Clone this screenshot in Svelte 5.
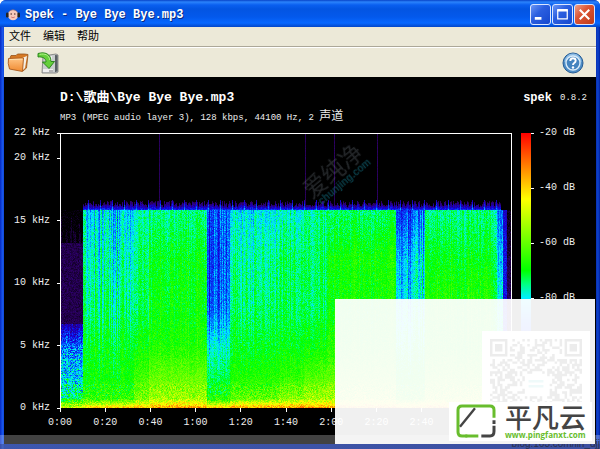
<script>
    import { onMount } from "svelte";

    const menus = ["文件", "编辑", "帮助"];
    const freqs = ["22 kHz", "20 kHz", "15 kHz", "10 kHz", "5 kHz", "0 kHz"];
    const times = ["0:00", "0:20", "0:40", "1:00", "1:20", "1:40", "2:00", "2:20", "2:40", "3:00"];
    const levels = ["-20 dB", "-40 dB", "-60 dB", "-80 dB", "-100 dB"];

    const W = 450;
    const H = 274;
    let canvas;

    // dB -> colour
    const palette = [
        [-120, 0, 0, 0],
        [-108, 45, 0, 100],
        [-96, 20, 0, 220],
        [-88, 0, 90, 255],
        [-80, 0, 235, 255],
        [-75, 0, 255, 130],
        [-70, 0, 255, 0],
        [-58, 120, 255, 0],
        [-44, 255, 255, 0],
        [-20, 255, 0, 0],
    ];

    // levels at these frequencies (kHz) for each part of the song
    const knots = [16, 12, 8, 5, 2.5, 0.8, 0.3, 0];
    const parts = [
        { end: 22, spread: 5, db: [-119, -109, -108, -88, -81, -75, -56, -48] },
        { end: 25, spread: 2, db: [-76, -74, -72, -70, -69, -66, -50, -40] },
        { end: 73, spread: 8, db: [-82, -78, -75, -71, -69, -66, -50, -36] },
        { end: 88, spread: 4, db: [-77, -74, -73, -69, -64, -58, -46, -34] },
        { end: 146, spread: 4, db: [-75, -70, -69, -67, -60, -54, -42, -32] },
        { end: 169, spread: 8, db: [-89, -90, -88, -79, -73, -67, -50, -38] },
        { end: 218, spread: 5, db: [-80, -76, -74, -71, -67, -61, -44, -33] },
        { end: 243, spread: 5, db: [-78, -73, -73, -70, -65, -57, -42, -32] },
        { end: 267, spread: 4, db: [-75, -73, -73, -69, -62, -54, -42, -32] },
        { end: 335, spread: 4, db: [-74, -68, -68, -66, -60, -54, -42, -32] },
        { end: 364, spread: 8, db: [-90, -82, -79, -74, -69, -63, -46, -36] },
        { end: 432, spread: 4, db: [-75, -70, -66, -66, -60, -54, -42, -32] },
        { end: 436, spread: 4, db: [-79, -75, -73, -71, -68, -62, -50, -40] },
        { end: 442, spread: 5, db: [-87, -82, -78, -76, -72, -66, -56, -48] },
        { end: 446, spread: 2, db: [-98, -94, -95, -94, -90, -86, -80, -80] },
        { end: 450, spread: 3, db: [-118, -113, -108, -116, -112, -112, -110, -110] },
    ];
    const clicks = [98, 244, 273, 316];

    function random(seed) {
        let s = seed;
        return () => {
            s = (s * 1664525 + 1013904223) >>> 0;
            return s / 4294967296;
        };
    }

    function colour(db) {
        const v = Math.max(-120, Math.min(-20, db));
        let i = 1;
        while (i < palette.length - 1 && palette[i][0] < v) i++;
        const a = palette[i - 1];
        const b = palette[i];
        const t = (v - a[0]) / (b[0] - a[0]);
        return [1, 2, 3].map((n) => a[n] + (b[n] - a[n]) * t);
    }

    function level(part, khz) {
        let i = 1;
        while (i < knots.length - 1 && knots[i] > khz) i++;
        const t = (knots[i - 1] - khz) / (knots[i - 1] - knots[i]);
        return part.db[i - 1] + (part.db[i] - part.db[i - 1]) * t;
    }

    onMount(() => {
        const ctx = canvas.getContext("2d");
        const image = ctx.createImageData(W, H);
        const rnd = random(77);
        for (let x = 0; x < W; x++) {
            const part = parts.find((p) => x < p.end);
            const intro = x < 22;
            const shade = (rnd() + rnd() - 1) * part.spread;
            const spike = x % 12 === 3;
            const fringe = spike ? 10 : 3 + rnd() * 6;
            const reach = intro ? 13.3 + (rnd() > 0.5 ? rnd() * 3 : 0) : 16;
            for (let y = 0; y < H; y++) {
                const khz = ((H - y) / H) * 22.05;
                const noise = (rnd() + rnd() - 1) * 5;
                let db = -120;
                if (khz > 16) {
                    const up = ((khz - 16) / 22.05) * H;
                    if (!intro && x < 440 && up < fringe) {
                        db = (spike ? -84 : -92) - (up / fringe) * 18 + noise;
                    } else if (clicks.includes(x)) {
                        db = -109 + noise * 0.4;
                    }
                } else if (intro && khz > 6.8) {
                    db = (khz > 13.3 ? (khz < reach ? -115 : -120) : -111) + noise;
                } else if (intro && khz > 5) {
                    db = -88 - (khz - 5) * 7 + shade + noise * 1.8;
                } else {
                    db = level(part, khz) + shade * Math.min(1, khz / 8) + noise * 1.1;
                    if (khz < 2) db += (rnd() - 0.5) * 12;
                    // horizontal harmonics in the quiet opening
                    if (intro) db += noise * 1.2 + (y % 5 === 0 ? 4 : 0);
                }
                const [r, g, b] = colour(db);
                const p = (y * W + x) * 4;
                image.data[p] = r;
                image.data[p + 1] = g;
                image.data[p + 2] = b;
                image.data[p + 3] = 255;
            }
        }
        ctx.putImageData(image, 0, 0);
    });

    function qrCells() {
        const rnd = random(5);
        const cells = [];
        for (let y = 0; y < 37; y++) {
            for (let x = 0; x < 37; x++) {
                const corner = (x < 8 || x > 28) && y < 8;
                const centre = x > 13 && x < 23 && y > 13 && y < 23;
                if (rnd() > 0.5 && !corner && !centre) cells.push(`M${x} ${y}h1v1h-1z`);
            }
        }
        return cells.join("");
    }
    const qr = qrCells();
</script>

<div class="window">
    <header class="titlebar">
        <svg class="face" viewBox="0 0 14 12" aria-hidden="true">
            <circle cx="7" cy="6" r="5.2" fill="#f6c9bb" />
            <path d="M2.5 3Q7-1.500 11.500 3" fill="none" stroke="#8a6a72" stroke-width=".7" />
            <rect x="0" y="3.500" width="2.600" height="5" rx="1.200" fill="#222" />
            <rect x="11.400" y="3.500" width="2.600" height="5" rx="1.200" fill="#222" />
            <circle cx="5.200" cy="5" r=".8" fill="#533" />
            <circle cx="8.800" cy="5" r=".8" fill="#533" />
            <path d="M5.200 8Q7 9.500 8.800 8" fill="none" stroke="#c66" stroke-width=".8" />
        </svg>
        <span class="caption">Spek - Bye Bye Bye.mp3</span>
        <button class="control" aria-label="最小化">
            <svg viewBox="0 0 20 20"><path d="M4 14h7" stroke="#fff" stroke-width="3" /></svg>
        </button>
        <button class="control" aria-label="最大化">
            <svg viewBox="0 0 20 20">
                <path d="M5 5.500h10v9H5z" fill="none" stroke="#fff" stroke-width="1.300" />
                <path d="M4.500 5.500h11" stroke="#fff" stroke-width="2.500" />
            </svg>
        </button>
        <button class="control close" aria-label="关闭">
            <svg viewBox="0 0 20 20">
                <path d="M5 5l10 10M15 5L5 15" stroke="#fff" stroke-width="2.200" />
            </svg>
        </button>
    </header>

    <nav class="menubar">
        {#each menus as menu}
            <button>{menu}</button>
        {/each}
    </nav>

    <div class="toolbar">
        <button aria-label="打开">
            <svg viewBox="0 0 22 22">
                <defs>
                    <linearGradient id="folder" x1="0" y1="0" x2="0" y2="1">
                        <stop offset="0" stop-color="#ffc585" />
                        <stop offset="1" stop-color="#f08a30" />
                    </linearGradient>
                </defs>
                <path d="M3 6l1-2.500h5l1.500-1.500h7L21 2.500 19.500 16 16 19z" fill="#d67a25" stroke="#95531c" stroke-width=".8" />
                <path d="M15 6l5-2-2 12-3 3z" fill="#f5f0e6" />
                <path d="M1.500 6.500L16.500 6l-1 13.500L2.500 17Q.5 11 1.500 6.500z" fill="url(#folder)" stroke="#a8571a" stroke-width=".9" />
                <path d="M2.500 7.500l13-.4" stroke="#ffe0ac" />
            </svg>
        </button>
        <button aria-label="保存">
            <svg viewBox="0 0 22 22">
                <path d="M6 4l13-2 2 1v17l-2 1H5z" fill="#c9cdcd" stroke="#777" stroke-width=".8" />
                <path d="M18 3l2.600.3v16l-2.600 1z" fill="#596064" />
                <path d="M8 5l7-1v7l-7 1zM6 17h10v3H6z" fill="#eee" />
                <path d="M12 19h4" stroke="#777" />
                <path d="M1 1.500C8-.500 14 2 14 9.500h3.500L12 16.500 5.500 10H9C9 6 5 4.500 1 5z" fill="#65cf3b" stroke="#237e17" stroke-width=".9" />
                <path d="M2.500 2.400C8 1.200 12 3 12.800 8" fill="none" stroke="#b4f28e" />
            </svg>
        </button>
        <button class="help" aria-label="帮助">
            <svg viewBox="0 0 22 22">
                <circle cx="11" cy="11" r="10" fill="#4d8cc5" stroke="#265c94" />
                <path d="M2.500 10A8.500 8.500 0 0 1 19.500 10Q11 13 2.500 10" fill="#8fbde5" />
                <circle cx="11" cy="11" r="7" fill="#4584bf" stroke="#d9ebf8" stroke-width="1.400" />
                <path d="M8.300 9Q8.300 6.300 11 6.300T13.700 8.800Q13.700 10.300 12 11.200 11 11.800 11 13" fill="none" stroke="#fff" stroke-width="1.900" />
                <circle cx="11" cy="15.500" r="1.200" fill="#fff" />
            </svg>
        </button>
    </div>

    <main class="view">
        <div class="heading">
            <h1>D:\歌曲\Bye Bye Bye.mp3</h1>
            <p class="brand"><b>spek</b> <span>0.8.2</span></p>
        </div>
        <p class="meta">MP3 (MPEG audio layer 3), 128 kbps, 44100 Hz, 2 <span>声道</span></p>

        <div class="chart">
            <div class="freqs">
                {#each freqs as freq}
                    <span>{freq}</span>
                {/each}
            </div>
            <div class="plot">
                <canvas bind:this={canvas} width={W} height={H}></canvas>
                <div class="mark">爱纯净<small>chunjing.com</small></div>
            </div>
            <div class="legend"></div>
            <div class="levels">
                {#each levels as label}
                    <span>{label}</span>
                {/each}
            </div>
            <div class="times">
                {#each times as time}
                    <span>{time}</span>
                {/each}
            </div>
        </div>
    </main>

    <div class="strip"><span>blog.163.com/lin_djj</span></div>

    <aside class="promo">
        <div class="code">
            <svg viewBox="0 0 37 37" aria-hidden="true">
                <path d={qr} fill="#ededed" />
                <path d="M.5.5h6v6h-6zM30.500.5h6v6h-6z" fill="none" stroke="#ececec" />
                <path d="M2 2h3v3H2zM32 2h3v3h-3z" fill="#ececec" />
                <path d="M15.500 17h6M15.500 19h6" stroke="#effafa" />
            </svg>
        </div>
        <div class="brandbox">
            <svg viewBox="0 0 120 102" aria-hidden="true">
                <path d="M34 96H18Q6 96 6 84V18Q6 6 18 6H102Q114 6 114 18V41" fill="none" stroke="#68bd2d" stroke-width="9" />
                <path d="M28 96H67" stroke="#68bd2d" stroke-width="9" />
                <path d="M12 68L57 13" stroke="#444" stroke-width="7" />
                <path d="M114 49V60M114 65V82Q114 96 102 96H76" fill="none" stroke="#444" stroke-width="9" />
            </svg>
            <div>
                <strong>平凡云</strong>
                <a href="http://www.pingfanxt.com">www.pingfanxt.com</a>
            </div>
        </div>
    </aside>
</div>

<style>
    :global(body) {
        margin: 0;
        background: #fff;
    }

    .window {
        position: relative;
        display: flex;
        flex-direction: column;
        box-sizing: border-box;
        min-height: 100vh;
        padding: 0 4px 5px;
        overflow: hidden;
        border-radius: 6px 6px 0 0;
        background: linear-gradient(90deg, #0629c4, #1c5df0 3px, #0b3dcf 4px, #0b30b4 calc(100% - 4px), #0d43cb calc(100% - 2px), #001ea0);
        font-family: "Liberation Mono", "Noto Sans CJK SC", monospace;
        font-size: 10px;
    }

    button {
        padding: 0;
        border: 0;
        background: none;
    }

    svg {
        display: block;
        width: 100%;
        height: 100%;
    }

    h1,
    p {
        margin: 0;
    }

    .titlebar {
        display: flex;
        align-items: center;
        gap: 1px;
        height: 27px;
        margin: 0 -4px;
        padding: 0 5px 0 6px;
        background: linear-gradient(#0843c8, #2b83fb 2px, #0a5ff0 5px, #0355e2 9px, #0359ec 17px, #0768ff 23px, #0346c8);
    }

    .titlebar .face {
        width: 14px;
        height: 12px;
        margin-top: 2px;
    }

    .caption {
        flex: 1;
        margin: 2px 0 0 4px;
        color: #fff;
        font-size: 12px;
        font-weight: bold;
        text-shadow: 1px 1px #0a2a80;
    }

    .control {
        box-sizing: border-box;
        width: 21px;
        height: 21px;
        margin-top: 2px;
        border: 1px solid #dbe6ff;
        border-radius: 3px;
        background: linear-gradient(135deg, #6b96f5, #2b5fe0 40%, #1547ce);
    }

    .close {
        background: linear-gradient(135deg, #f0a088, #dc5535 40%, #bd3a18);
    }

    .menubar {
        display: flex;
        gap: 12px;
        height: 19px;
        padding-left: 5px;
        border-bottom: 1px solid #aca899;
        background: #ece9d8;
    }

    .menubar button {
        height: 17px;
        color: #000;
        font: 11px/17px "Noto Sans CJK SC", sans-serif;
    }

    .toolbar {
        display: flex;
        align-items: center;
        gap: 8px;
        height: 29px;
        padding: 0 12px 0 3px;
        border-top: 1px solid #fff;
        background: #ece9d8;
    }

    .toolbar button {
        width: 22px;
        height: 22px;
    }

    .toolbar .help {
        margin-left: auto;
    }

    .view {
        display: flex;
        flex: 1;
        flex-direction: column;
        padding-top: 12px;
        background: #000;
        color: #eee;
    }

    .heading {
        display: flex;
        justify-content: space-between;
        padding: 0 9px 0 56px;
        line-height: 18px;
    }

    h1 {
        color: #fff;
        font-size: 13px;
        line-height: 18px;
    }

    .brand {
        display: flex;
        gap: 8px;
    }

    .brand b {
        color: #fff;
        font-size: 12px;
    }

    .brand span {
        font-size: 9px;
    }

    .meta {
        margin: 3px 0 7px;
        padding-left: 56px;
        font-size: 9px;
        line-height: 16px;
    }

    .meta span {
        font-size: 12px;
        line-height: 12px;
    }

    .chart {
        display: grid;
        flex: 1;
        grid-template-columns: 56px 1fr 10px 65px;
        grid-template-rows: 1fr 36px;
    }

    .freqs {
        display: grid;
        grid-template-rows: 2fr repeat(4, 5fr) 0;
        text-align: right;
    }

    .freqs span,
    .levels span {
        display: flex;
        align-items: center;
        height: 14px;
        margin-top: -7px;
        line-height: 14px;
        white-space: pre;
    }

    .freqs span {
        justify-content: flex-end;
        gap: 7px;
    }

    .freqs span::after,
    .levels span::before {
        content: "";
        width: 3px;
        height: 1px;
        background: #fff;
    }

    .plot {
        position: relative;
        display: grid;
        margin-right: 9px;
        border: 1px solid #fff;
        border-bottom: 0;
    }

    canvas {
        width: 100%;
        height: 100%;
        min-height: 0;
    }

    .mark {
        position: absolute;
        top: 22px;
        left: 240px;
        color: rgba(120, 130, 140, 0.3);
        font: 23px/24px "Noto Sans CJK SC", sans-serif;
        transform: rotate(-40deg);
    }

    .mark small {
        display: block;
        color: rgba(20, 120, 140, 0.5);
        font: bold 10px/12px "Liberation Sans", sans-serif;
        text-align: right;
    }

    .legend {
        background: linear-gradient(#f00, #ff0 24%, #78ff00 38%, #0f0 50%, #00ff82 55%, #0ef 60%, #005aff 68%, #1400dc 76%, #2d0064 88%, #000);
    }

    .levels {
        display: grid;
        grid-template-rows: repeat(5, 1fr);
    }

    .levels span {
        gap: 5px;
    }

    .times {
        display: grid;
        grid-column: 2;
        grid-template-columns: repeat(10, 1fr);
        margin-right: 9px;
    }

    .times span {
        display: flex;
        flex-direction: column;
        align-items: center;
        width: 30px;
        margin-left: -15px;
        line-height: 14px;
    }

    .times span::before {
        content: "";
        width: 1px;
        height: 4px;
        margin-bottom: 4px;
        background: #fff;
    }

    .strip {
        position: absolute;
        right: 0;
        bottom: 0;
        left: 0;
        height: 14px;
        background: linear-gradient(transparent 9px, rgba(30, 30, 70, 0.3) 9px), rgba(255, 255, 255, 0.26);
        text-align: right;
    }

    .strip span {
        color: #28304c;
        font: 10px/18px "Liberation Sans", sans-serif;
    }

    .promo {
        position: absolute;
        right: 5px;
        bottom: 5px;
        width: 260px;
        height: 145px;
        background: rgba(255, 255, 255, 0.94);
    }

    .code {
        box-sizing: border-box;
        width: 108px;
        height: 108px;
        margin: 32px 5px 0 auto;
        padding: 8px 7px;
        background: #fff;
    }

    .brandbox {
        position: absolute;
        right: 3px;
        bottom: 3px;
        display: flex;
        gap: 9px;
        box-sizing: border-box;
        width: 143px;
        height: 39px;
        padding: 2px 7px;
        background: #fff;
        white-space: nowrap;
    }

    .brandbox svg {
        flex: none;
        width: 40px;
        height: 34px;
    }

    .brandbox strong {
        display: block;
        color: #444;
        font: 500 27px/26px "Noto Sans CJK SC", sans-serif;
    }

    .brandbox a {
        display: block;
        color: #68bd2d;
        font: bold 8px/9px "Open Sans", sans-serif;
        text-decoration: none;
    }
</style>
